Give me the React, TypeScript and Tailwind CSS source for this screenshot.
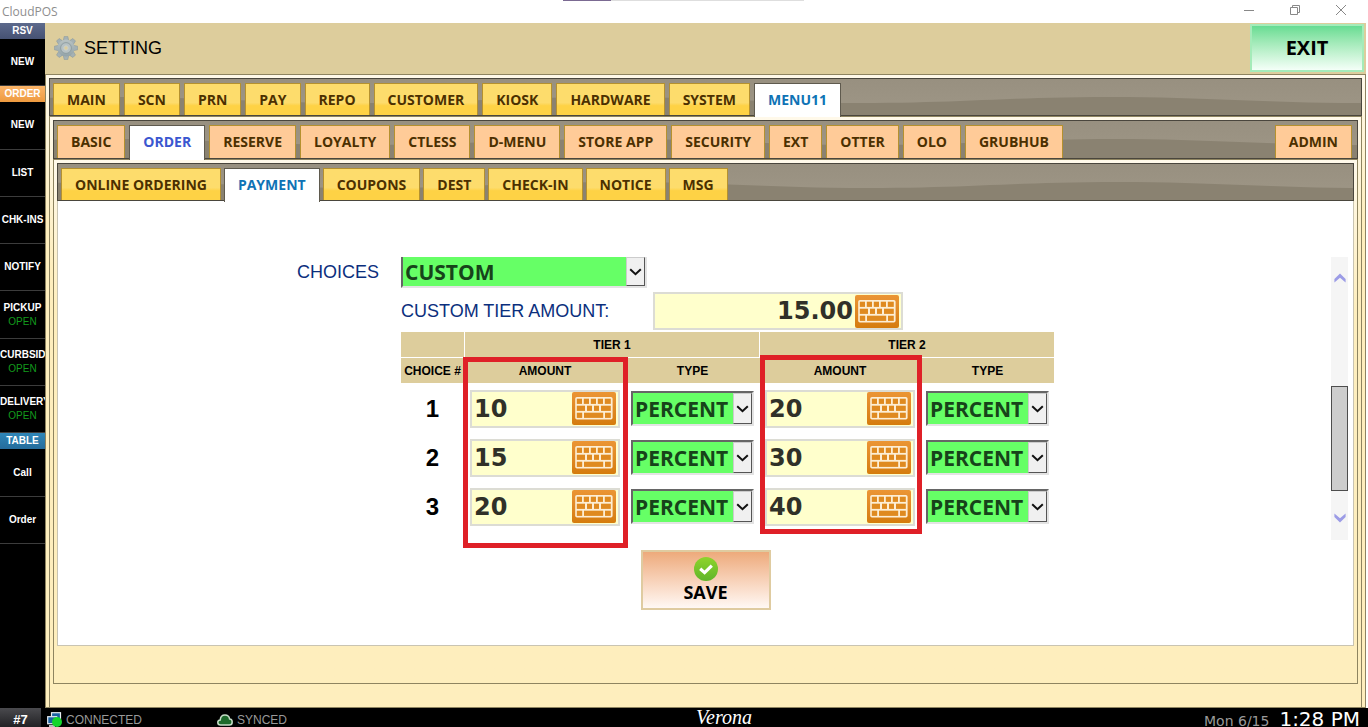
import { Fragment } from 'react'
import { cx } from 'class-variance-authority'

type Tone = 'yellow' | 'peach'

interface SideItem {
  label: string
  open?: boolean
  header?: string
}

const SIDE: SideItem[] = [
  { label: 'RSV', header: 'bg-linear-to-b from-[#5d6a8c] to-[#465273]' },
  { label: 'NEW' },
  { label: 'ORDER', header: 'bg-linear-to-b from-[#fbb468] to-[#ee9a3f]' },
  { label: 'NEW' },
  { label: 'LIST' },
  { label: 'CHK-INS' },
  { label: 'NOTIFY' },
  { label: 'PICKUP', open: true },
  { label: 'CURBSIDE', open: true },
  { label: 'DELIVERY', open: true },
  { label: 'TABLE', header: 'bg-linear-to-b from-[#2f86b8] to-[#256c9c]' },
  { label: 'Call' },
  { label: 'Order' },
]

const MAIN_TABS = ['MAIN', 'SCN', 'PRN', 'PAY', 'REPO', 'CUSTOMER', 'KIOSK', 'HARDWARE', 'SYSTEM', 'MENU11']
const MENU_TABS = ['BASIC', 'ORDER', 'RESERVE', 'LOYALTY', 'CTLESS', 'D-MENU', 'STORE APP', 'SECURITY', 'EXT', 'OTTER', 'OLO', 'GRUBHUB']
const ORDER_TABS = ['ONLINE ORDERING', 'PAYMENT', 'COUPONS', 'DEST', 'CHECK-IN', 'NOTICE', 'MSG']

const CHOICES = [
  { id: 1, tier1: '10', tier2: '20' },
  { id: 2, tier1: '15', tier2: '30' },
  { id: 3, tier1: '20', tier2: '40' },
]

const SANS = "font-['Open_Sans','Noto_Sans',sans-serif]"
const ARIAL = "font-['Liberation_Sans',Arial,sans-serif]"
const VERDANA = "font-['DejaVu_Sans',Verdana,sans-serif]"

function GearIcon() {
  return (
    <svg width="24" height="24" viewBox="0 0 24 24" aria-hidden="true">
      <defs>
        <linearGradient id="gear" x1="0" y1="0" x2="0" y2="1">
          <stop offset="0" stopColor="#b9c3c3" />
          <stop offset="1" stopColor="#93a3a8" />
        </linearGradient>
      </defs>
      <g fill="#a5b1b4" stroke="#84959a" strokeWidth="0.5">
        {[0, 45, 90, 135].map(a => (
          <path key={a} d="M10.2 0.4H13.8L14.6 4V20L13.8 23.6H10.2L9.4 20V4Z" transform={`rotate(${a} 12 12)`} />
        ))}
      </g>
      <circle cx="12" cy="12" r="8.6" fill="url(#gear)" />
      <circle cx="12" cy="12" r="5.4" fill="#b7c2c4" stroke="#8c9b9f" strokeWidth="0.9" />
      <circle cx="12" cy="12" r="2.2" fill="#dccd9c" stroke="#c9d0cd" strokeWidth="1" />
    </svg>
  )
}

function KeyboardIcon() {
  const keys = [
    [4.8, 6.7, 5.2], [11.8, 6.7, 5.2], [18.8, 6.7, 5.2], [25.8, 6.7, 5.2], [32.8, 6.7, 6],
    [4.8, 13.7, 8.2], [15, 13.7, 5], [22, 13.7, 5], [29, 13.7, 9.8],
    [4.8, 20.7, 5.4], [12, 20.7, 19.2], [33, 20.7, 5.8],
  ]
  return (
    <svg width="44" height="33" viewBox="0 0 44 33" aria-hidden="true">
      <rect x="3.2" y="5" width="37.4" height="22.6" rx="1.8" fill="#fdeed4" />
      {keys.map(([x, y, w]) => (
        <rect key={`${x}-${y}`} x={x} y={y} width={w} height="5.2" fill="#df8a20" />
      ))}
    </svg>
  )
}

// glossy wave behind every tab strip, repeats each 500px
function Wave({ id }: { id: string }) {
  return (
    <svg className="absolute inset-0 w-full h-full" aria-hidden="true">
      <defs>
        <linearGradient id={`${id}-g`} x1="0" y1="0" x2="0" y2="1">
          <stop offset="0" stopColor="#989080" />
          <stop offset="1" stopColor="#9f9787" />
        </linearGradient>
        <pattern id={id} width="500" height="40" patternUnits="userSpaceOnUse">
          <rect width="500" height="40" fill={`url(#${id}-g)`} />
          <path
            d="M-190 24C-90 24-40 18 60 18S210 24 310 24S460 18 560 18V40H-190Z"
            fill="#8a8271"
          />
        </pattern>
      </defs>
      <rect width="100%" height="100%" fill={`url(#${id})`} />
    </svg>
  )
}

function Tab({ label, tone, active }: { label: string; tone: Tone; active?: boolean }) {
  return (
    <button
      className={cx(
        'relative shrink-0 px-[13px] border border-b-0 text-sm font-bold whitespace-nowrap',
        active && '-mb-0.5 pb-0.5 bg-white border-[#5f5a4e]',
        active && (tone === 'yellow' ? 'text-[#0f73b5]' : 'text-[#3b57d0]'),
        !active && 'border-[#b5912f] text-[#4c3000]',
        !active && (tone === 'yellow'
          ? 'bg-linear-to-b from-[#fddc6c] from-60% to-[#fed245] to-70%'
          : 'bg-[#ffcb98]'),
      )}
    >
      {label}
    </button>
  )
}

interface TabStripProps {
  id: string
  tabs: string[]
  active: string
  tone: Tone
  extra?: string
  className: string
}

function TabStrip({ id, tabs, active, tone, extra, className }: TabStripProps) {
  return (
    <nav className={cx('relative flex shrink-0 pt-1 px-[3px] border border-[#4a463d]', className)}>
      <Wave id={id} />
      {tabs.map(t => <Tab key={t} label={t} tone={tone} active={t === active} />)}
      {extra && (
        <div className="relative flex ml-auto pr-0.5">
          <Tab label={extra} tone={tone} />
        </div>
      )}
    </nav>
  )
}

function Select({ label, id, value, className }: { label?: string; id?: string; value: string; className: string }) {
  return (
    <div className={cx('relative border-2 border-l-[#666] border-t-[#666] border-r-[#e3e3e3] border-b-[#e3e3e3]', className)}>
      <select
        id={id}
        aria-label={label}
        defaultValue={value}
        className="block w-full h-full appearance-none bg-[#66ff66] pl-0.5 text-[21px] leading-7 font-bold text-[#17431a]"
      >
        <option>{value}</option>
      </select>
      <span className="pointer-events-none absolute inset-y-0 right-0 flex w-[19px] items-center justify-center border border-l-[#ccc] border-t-[#ccc] border-r-[#555] border-b-[#555] bg-[#f0f0f0]">
        <svg width="13" height="8" viewBox="0 0 13 8" fill="none" stroke="#111" strokeWidth="2" aria-hidden="true">
          <path d="M1.2 1.2L6.5 6.2L11.8 1.2" />
        </svg>
      </span>
    </div>
  )
}

interface AmountInputProps {
  label?: string
  id?: string
  value: string
  align?: 'text-left' | 'text-right'
  className: string
}

function AmountInput({ label, id, value, align = 'text-left', className }: AmountInputProps) {
  return (
    <div className={cx('flex h-[38px] items-center border-2 border-[#dcdcd4] bg-[#ffffcc] pr-0.5', className)}>
      <input
        id={id}
        aria-label={label}
        defaultValue={value}
        className={cx('min-w-0 flex-1 bg-transparent px-0.5 text-2xl leading-8 font-bold text-[#303028]', align, VERDANA)}
      />
      <button aria-label="Open keyboard" className="shrink-0 rounded-xs bg-linear-to-b from-[#eb9534] to-[#d57c0c]">
        <KeyboardIcon />
      </button>
    </div>
  )
}

function TierTable() {
  const th = 'h-[26px] border-b border-white bg-[#ddcd9c] p-0 text-center font-bold'
  return (
    <div className="relative w-[653px]">
      <table className={cx('w-full table-fixed border-separate border-spacing-0 text-black', ARIAL)}>
        <colgroup>
          <col className="w-[63px]" />
          <col className="w-[162px]" />
          <col className="w-[133px]" />
          <col className="w-[162px]" />
          <col className="w-[133px]" />
        </colgroup>
        <thead className="text-xs">
          <tr>
            <th className={th}></th>
            <th colSpan={2} className={cx(th, 'border-l')}>TIER 1</th>
            <th colSpan={2} className={cx(th, 'border-l')}>TIER 2</th>
          </tr>
          <tr>
            <th className={cx(th, 'whitespace-nowrap')}>CHOICE #</th>
            <th className={th}>AMOUNT</th>
            <th className={th}>TYPE</th>
            <th className={th}>AMOUNT</th>
            <th className={th}>TYPE</th>
          </tr>
        </thead>
        <tbody>
          {CHOICES.map(c => (
            <tr key={c.id}>
              <th className="h-[49px] p-0 text-center text-2xl font-bold">{c.id}</th>
              {[c.tier1, c.tier2].map((amount, i) => (
                <Fragment key={i}>
                  <td className="p-0">
                    <AmountInput label={`Choice ${c.id} tier ${i + 1} amount`} value={amount} className="mx-auto w-[150px]" />
                  </td>
                  <td className={cx('p-0', SANS)}>
                    <Select label={`Choice ${c.id} tier ${i + 1} type`} value="PERCENT" className="mx-auto h-[35px] w-[123px]" />
                  </td>
                </Fragment>
              ))}
            </tr>
          ))}
        </tbody>
      </table>
      {/* highlight boxes over the amount columns */}
      <div className="pointer-events-none absolute left-[62px] top-[25px] h-[191px] w-[165px] border-5 border-[#df2027]" />
      <div className="pointer-events-none absolute left-[359px] top-[23px] h-[179px] w-[162px] border-5 border-[#df2027]" />
    </div>
  )
}

function ScrollBar() {
  return (
    <div className="ml-auto flex w-[17px] flex-col items-center bg-[#f5f5f5] text-[#9c9ce6]">
      <button aria-label="Scroll up" className="flex h-[129px] w-full justify-center pt-4">
        <svg width="12" height="10" viewBox="0 0 12 10" fill="currentColor">
          <path d="M6 0.5L11.6 6V9.6L6 4.8L0.4 9.6V6Z" />
        </svg>
      </button>
      <div className="h-[105px] w-full border border-[#4d4d4d] bg-[#cdcdcd]" />
      <button aria-label="Scroll down" className="flex w-full justify-center pt-[22px]">
        <svg width="12" height="10" viewBox="0 0 12 10" fill="currentColor">
          <path d="M6 9.5L11.6 4V0.4L6 5.2L0.4 0.4V4Z" />
        </svg>
      </button>
    </div>
  )
}

function PaymentPanel() {
  return (
    <section className="flex flex-1 flex-col border border-t-0 border-[#c9c4b2] bg-white pt-14">
      <div className="flex h-[283px] shrink-0 pr-[5px]">
        <div className="grid grid-cols-[321px_653px] content-start gap-x-[22px]">
          <label htmlFor="choices" className={cx('text-right text-lg leading-[30px] text-[#0b2f7d]', ARIAL)}>
            CHOICES
          </label>
          <Select id="choices" value="CUSTOM" className="h-[31px] w-[246px] border-t-0" />
          <div className="col-start-2 mt-1 mb-0.5 flex items-center justify-between pr-[151px]">
            <label htmlFor="tier-amount" className={cx('text-lg text-[#0b2f7d]', ARIAL)}>
              CUSTOM TIER AMOUNT:
            </label>
            <AmountInput id="tier-amount" value="15.00" align="text-right" className="w-[250px]" />
          </div>
          <div className="col-start-2">
            <TierTable />
          </div>
        </div>
        <ScrollBar />
      </div>
      <button className="mx-auto mt-2.5 flex h-[60px] w-[130px] shrink-0 flex-col items-center border-2 border-[#dfcba0] bg-linear-to-b from-[#edaa7b] to-[#fff8f4] pt-[5px] text-lg leading-[22px] font-bold text-black">
        <svg width="24" height="24" viewBox="0 0 24 24" aria-hidden="true">
          <defs>
            <linearGradient id="ok" x1="0" y1="0" x2="0" y2="1">
              <stop offset="0" stopColor="#8fd42c" />
              <stop offset="1" stopColor="#5fb52a" />
            </linearGradient>
          </defs>
          <circle cx="12" cy="12" r="12" fill="url(#ok)" />
          <path d="M6.2 11.8L10.6 15.6L17.8 8.6" fill="none" stroke="#fff" strokeWidth="3.2" />
        </svg>
        SAVE
      </button>
    </section>
  )
}

function Sidebar() {
  return (
    <aside className={cx('w-[45px] shrink-0 overflow-hidden bg-black text-[10px] font-bold text-white', ARIAL)}>
      <div className="flex h-[521px] flex-col">
        {SIDE.map((s, i) =>
          s.header ? (
            <div key={i} className={cx('h-4 shrink-0 text-center leading-4', s.header)}>{s.label}</div>
          ) : (
            <button key={i} className="flex flex-1 flex-col items-center justify-center border-b border-[#3c3c3c] leading-[14px] whitespace-nowrap">
              <span className={cx(s.label.length > 7 && 'w-full overflow-hidden text-left')}>{s.label}</span>
              {s.open && <span className="font-normal text-[#139a1d]">OPEN</span>}
            </button>
          )
        )}
      </div>
    </aside>
  )
}

function TitleBar() {
  return (
    <div className="relative flex h-[23px] shrink-0 items-center bg-white px-0.5 text-xs text-[#8e8e8e]">
      <span>CloudPOS</span>
      <div className="absolute left-[563px] top-0 flex h-px w-[241px] bg-[#dedede]">
        <div className="w-12 bg-[#7b6a92]" />
      </div>
      <div className="ml-auto flex gap-9 pr-5 pb-1">
        <button aria-label="Minimize">
          <svg width="10" height="10" viewBox="0 0 10 10" stroke="#888" fill="none"><path d="M0 5.5H10" /></svg>
        </button>
        <button aria-label="Restore">
          <svg width="10" height="10" viewBox="0 0 10 10" stroke="#888" fill="none">
            <path d="M0.5 2.5H7.5V9.5H0.5ZM2.5 2.5V0.5H9.5V7.5H7.5" />
          </svg>
        </button>
        <button aria-label="Close">
          <svg width="10" height="10" viewBox="0 0 10 10" stroke="#888" fill="none"><path d="M0 0L10 10M10 0L0 10" /></svg>
        </button>
      </div>
    </div>
  )
}

function StatusBar() {
  return (
    <footer className={cx('relative flex h-[19px] shrink-0 items-center bg-black text-xs text-[#999]', ARIAL)}>
      <button className="h-full w-[41px] bg-linear-to-b from-[#4a4a4e] to-[#222225] pt-1 text-[13px] leading-4 font-bold text-white">#7</button>
      <span className="ml-1.5 flex w-[170px] items-center gap-1 pt-1">
        <svg width="15" height="15" viewBox="0 0 15 15" aria-hidden="true">
          <rect x="4.5" y="0.7" width="9" height="7" fill="#1c62a0" stroke="#e8eef2" strokeWidth="1.2" />
          <rect x="0.7" y="4.7" width="9" height="7" fill="#1c62a0" stroke="#e8eef2" strokeWidth="1.2" />
          <path d="M2 14H8" stroke="#e8eef2" strokeWidth="1.6" />
          <circle cx="10" cy="10" r="5" fill="#14d62c" />
        </svg>
        CONNECTED
      </span>
      <span className="flex items-center gap-1 pt-1">
        <svg width="16" height="12" viewBox="0 0 16 12" aria-hidden="true">
          <path
            d="M3.6 11C1.8 11 0.8 9.8 0.8 8.5C0.8 7.2 1.8 6.2 3.2 6.1C3.4 3 5.4 1 8 1C10.4 1 12.2 2.5 12.6 4.9C14.2 5 15.2 6.3 15.2 7.9C15.2 9.7 14 11 12.3 11Z"
            fill="#1d6a2b" stroke="#c4dcc6" strokeWidth="1.5"
          />
        </svg>
        SYNCED
      </span>
      <span className="absolute inset-y-0 left-1/2 -translate-x-1/2 pl-20 font-['Liberation_Serif',serif] text-xl leading-[19px] italic text-white">
        Verona
      </span>
      <span className={cx('ml-auto flex items-baseline gap-2.5 pt-1 pr-2', VERDANA)}>
        <span className="text-sm leading-4">Mon 6/15</span>
        <span className="text-xl leading-4 text-white">1:28 PM</span>
      </span>
    </footer>
  )
}

export default function App() {
  return (
    <div className={cx('flex h-screen flex-col overflow-hidden bg-white', SANS)}>
      <TitleBar />
      <div className="flex min-h-0 flex-1 bg-white pr-0.5">
        <Sidebar />
        <main className="flex min-w-0 flex-1 flex-col">
          <header className="flex h-[51px] shrink-0 items-center bg-[#ddcd9c] pb-0.5 pl-[9px]">
            <GearIcon />
            <h1 className={cx('ml-1.5 text-lg text-black', ARIAL)}>SETTING</h1>
            <button className="mr-0.5 ml-auto h-12 w-[114px] border-2 border-[#a5ebb9] bg-linear-to-b from-[#66dc92] to-[#f4fff8] text-xl font-bold text-black">
              EXIT
            </button>
          </header>
          <div className="flex min-h-0 flex-1 flex-col border border-[#8e8460] bg-linear-to-b from-[#fff9ea] to-[#feeebd] to-[150px] px-[3px] pt-[3px]">
            <TabStrip id="w1" tabs={MAIN_TABS} active="MENU11" tone="yellow" className="h-[38px] gap-1" />
            <div className="flex min-h-0 flex-1 flex-col border border-b-0 border-[#8e8460] bg-linear-to-b from-[#fff9ea] to-[#feeebd] to-[150px] px-[3px] pt-[3px] pb-[23px]">
              <TabStrip id="w2" tabs={MENU_TABS} active="ORDER" tone="peach" extra="ADMIN" className="h-[39px] gap-1" />
              <div className="flex min-h-0 flex-1 flex-col border border-[#8e8460] bg-linear-to-b from-[#fff9ea] to-[#feeebd] to-[150px] px-[3px] pt-[3px] pb-[37px]">
                <TabStrip id="w3" tabs={ORDER_TABS} active="PAYMENT" tone="yellow" className="h-[38px] gap-[3px]" />
                <PaymentPanel />
              </div>
            </div>
          </div>
        </main>
      </div>
      <StatusBar />
    </div>
  )
}
